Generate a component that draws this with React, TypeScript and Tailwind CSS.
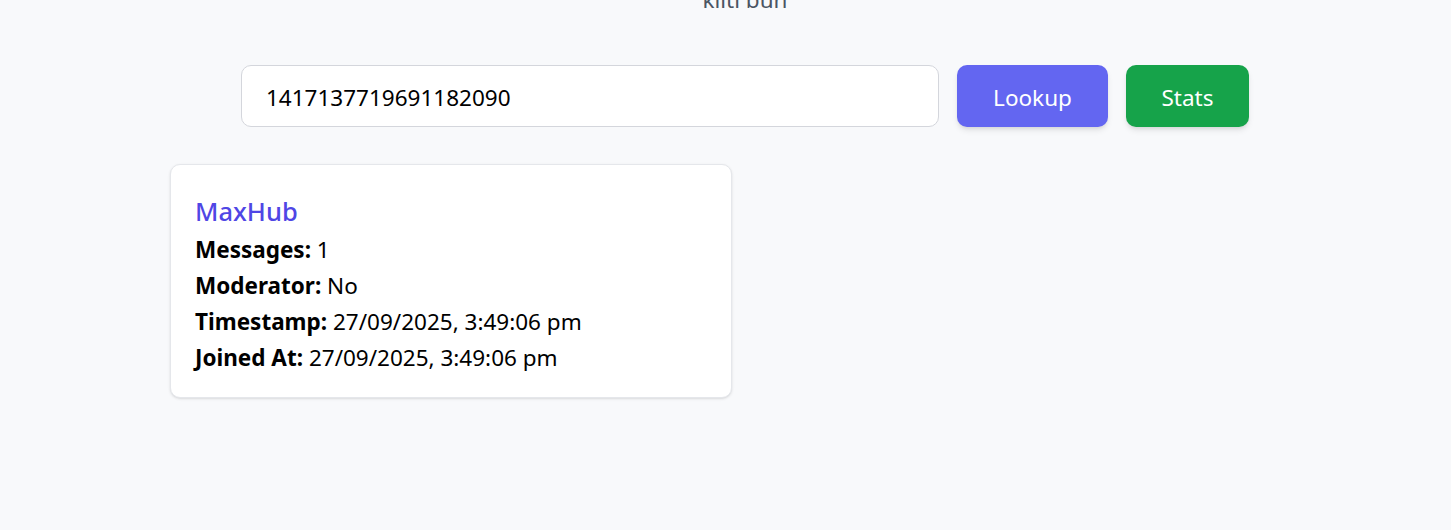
import { useState } from 'react';

// Fila de detalle
function InfoRow({ label, value }: { label: string; value: string }) {
  return (
    <p className="leading-[36px]">
      <span className="font-bold">{label}:</span> {value}
    </p>
  );
}

export default function App() {
  const [query, setQuery] = useState('1417137719691182090');

  return (
    <div className="min-h-[530px] overflow-hidden bg-[#f8f9fb] font-['Noto_Sans',sans-serif] text-black">
      <div className="ml-[170px] w-[1150px]">
        <p className="-mt-[17px] text-center text-[22.5px] leading-[33px] text-[#4b5563]">kliti bun</p>

        {/* Search */}
        <div className="mt-[49px] flex justify-center gap-[18px]">
          <input
            value={query}
            onChange={(e) => setQuery(e.target.value)}
            className="h-[62px] w-[698px] rounded-[10px] border border-[#d4d6dc] bg-white px-[24px] pt-[3px] text-[22.5px] text-black outline-none"
          />
          <button
            type="button"
            className="h-[62px] w-[151px] rounded-[10px] bg-[#6366f1] pt-[3px] text-[22.5px] text-white shadow-md"
          >
            Lookup
          </button>
          <button
            type="button"
            className="h-[62px] w-[123px] rounded-[10px] bg-[#16a34a] pt-[3px] text-[22.5px] text-white shadow-md"
          >
            Stats
          </button>
        </div>

        {/* Results */}
        <div className="mt-[37px] grid grid-cols-2 gap-[26px]">
          <div className="rounded-[10px] border border-[#e5e7eb] bg-white px-[24px] pt-[28px] pb-[21px] text-[22.5px] shadow-sm">
            <h3 className="mb-[3px] text-[25.5px] leading-[36px] font-medium text-[#4f46e5]">MaxHub</h3>
            <InfoRow label="Messages" value="1" />
            <InfoRow label="Moderator" value="No" />
            <InfoRow label="Timestamp" value="27/09/2025, 3:49:06 pm" />
            <InfoRow label="Joined At" value="27/09/2025, 3:49:06 pm" />
          </div>
        </div>
      </div>
    </div>
  );
}
